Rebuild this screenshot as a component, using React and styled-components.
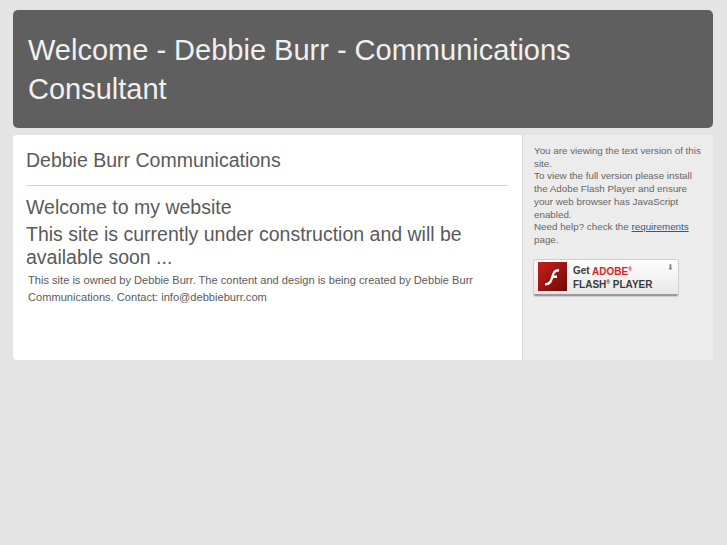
import React from "react";
import styled, { createGlobalStyle } from "styled-components";

const Global = createGlobalStyle`
  body {
    margin: 0;
    background: #e4e4e4;
    font-family: "Liberation Sans", Arial, sans-serif;
  }
`;

const Page = styled.div`
  padding: 10px 14px 0 13px;
`;

const Header = styled.header`
  height: 118px;
  padding: 21px 15px 0;
  box-sizing: border-box;
  border-radius: 5px;
  background: #5f5f5f;
`;

const Title = styled.h1`
  margin: 0;
  font-size: 29px;
  font-weight: normal;
  line-height: 39px;
  color: #f0f0f0;
`;

const Panel = styled.div`
  display: flex;
  margin-top: 7px;
  height: 225px;
  border-radius: 4px;
  overflow: hidden;
  background: #ffffff;
`;

const Main = styled.main`
  flex: 1;
  padding: 13px 14px 0 13px;
`;

const SiteName = styled.h2`
  margin: 0;
  padding-bottom: 13px;
  border-bottom: 1px solid #d4d4d4;
  font-size: 19.5px;
  font-weight: normal;
  line-height: 24px;
  color: #5a5a5a;
`;

const Heading = styled.h3`
  margin: ${(p) => p.$top || 0}px 0 0;
  font-size: 19.5px;
  font-weight: normal;
  line-height: 23px;
  color: #5a5a5a;
`;

const Small = styled.p`
  margin: 3px 0 0 2px;
  font-size: 11.1px;
  line-height: 17px;
  color: #5a5a5a;
`;

const Sidebar = styled.aside`
  width: 191px;
  padding: 10px 11px 0 11px;
  box-sizing: border-box;
  border-left: 1px solid #d8d8d8;
  background: #ececec;
  font-size: 9.8px;
  line-height: 12.7px;
  color: #666666;
`;

const Link = styled.a`
  color: #1f5f8a;
  text-decoration: underline;
`;

const FlashBadge = styled.div`
  display: flex;
  align-items: center;
  gap: 6px;
  position: relative;
  width: 144px;
  height: 36px;
  margin-top: 13px;
  padding: 3px 4px;
  box-sizing: border-box;
  border-radius: 2px;
  background: linear-gradient(#ffffff, #e8e8e8);
  border-bottom: 2px solid #9a9a9a;
  box-shadow: 0 0 0 1px #cfcfcf;
`;

const FlashText = styled.div`
  font-size: 10px;
  font-weight: bold;
  line-height: 11px;
  color: #3a3a3a;
`;

const Red = styled.span`
  color: #d7261e;
`;

const Arrow = styled.span`
  position: absolute;
  top: 2px;
  right: 4px;
  font-size: 8px;
  color: #888888;
`;

export default function App() {
  return (
    <>
      <Global />
      <Page>
        <Header>
          <Title>Welcome - Debbie Burr - Communications Consultant</Title>
        </Header>
        <Panel>
          <Main>
            <SiteName>Debbie Burr Communications</SiteName>
            <Heading $top={10}>Welcome to my website</Heading>
            <Heading $top={4}>
              This site is currently under construction and will be available soon ...
            </Heading>
            <Small>
              This site is owned by Debbie Burr. The content and design is being
              created by Debbie Burr Communications. Contact: info@debbieburr.com
            </Small>
          </Main>
          <Sidebar>
            You are viewing the text version of this site.
            <br />
            To view the full version please install the Adobe Flash Player and
            ensure your web browser has JavaScript enabled.
            <br />
            Need help? check the <Link href="#">requirements</Link> page.
            <FlashBadge>
              <svg width="29" height="29" viewBox="0 0 29 29">
                <defs>
                  <linearGradient id="fg" x1="0" y1="0" x2="1" y2="1">
                    <stop offset="0" stopColor="#c8201a" />
                    <stop offset="1" stopColor="#6e0a08" />
                  </linearGradient>
                </defs>
                <rect width="29" height="29" fill="url(#fg)" />
                <path
                  d="M21 7c-5 0-6.5 3-7.7 7.5C12.2 18.5 11 21 7 21v2.5c5.5 0 7-3.5 8.2-7.5H19v-2.6h-3.1c.9-2.7 2.3-4 5.1-4z"
                  fill="#ffffff"
                />
              </svg>
              <FlashText>
                Get <Red>ADOBE<sup style={{ fontSize: 5 }}>®</sup></Red>
                <br />
                FLASH<sup style={{ fontSize: 5 }}>®</sup> PLAYER
              </FlashText>
              <Arrow>⬇</Arrow>
            </FlashBadge>
          </Sidebar>
        </Panel>
      </Page>
    </>
  );
}
